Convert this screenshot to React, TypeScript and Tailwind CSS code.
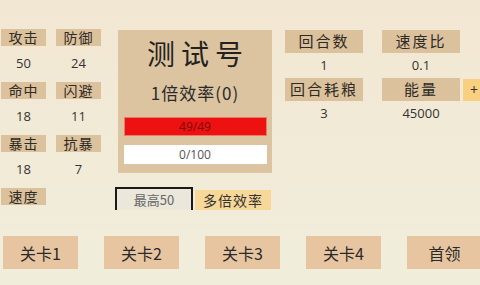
const cjk = "font-['Noto_Sans_CJK_SC','Noto_Sans',sans-serif]"
const num = "font-['Open_Sans','Liberation_Sans',sans-serif]"

const leftStats = [
  [
    { label: '攻击', value: '50' },
    { label: '防御', value: '24' },
  ],
  [
    { label: '命中', value: '18' },
    { label: '闪避', value: '11' },
  ],
  [
    { label: '暴击', value: '18' },
    { label: '抗暴', value: '7' },
  ],
]

const rightStats = [
  [
    { label: '回合数', value: '1' },
    { label: '速度比', value: '0.1' },
  ],
  [
    { label: '回合耗粮', value: '3' },
    { label: '能量', value: '45000' },
  ],
]

const levels = ['关卡1', '关卡2', '关卡3', '关卡4', '首领']

function StatLabel({ text, wide }: { text: string; wide?: boolean }) {
  return (
    <div
      className={`shrink-0 flex items-center justify-center bg-[#dcc19d] text-[#2e2a24] ${cjk} ${
        wide ? 'h-[23px] w-[78px] text-[15px] tracking-[2px]' : 'h-[17px] w-[45px] text-[14px] tracking-[1px]'
      }`}
    >
      {text}
    </div>
  )
}

export default function App() {
  return (
    <div className="w-[480px] h-[285px] overflow-hidden bg-gradient-to-b from-[#f2e7d3] to-[#f0eedb] flex flex-col">
      <div className="flex pt-[29px]">
        {/* 左侧属性 */}
        <div className="w-[118px] shrink-0 pl-[1px] flex flex-col">
          {leftStats.map((row, i) => (
            <div key={i} className="flex flex-col">
              <div className="flex gap-[10px]">
                {row.map((s) => (
                  <StatLabel key={s.label} text={s.label} />
                ))}
              </div>
              <div className="flex gap-[10px] h-[36px]">
                {row.map((s) => (
                  <div
                    key={s.label}
                    className={`w-[45px] flex items-center justify-center text-[13px] text-[#333] ${num}`}
                  >
                    {s.value}
                  </div>
                ))}
              </div>
            </div>
          ))}
          <StatLabel text="速度" />
        </div>

        {/* 中间面板 */}
        <div className="w-[167px] shrink-0 flex flex-col">
          <div className="w-[154px] h-[143px] mt-[1px] bg-[#dcc4a1] flex flex-col items-center px-[5px]">
            <div
              className={`mt-[6px] h-[34px] pl-[6px] flex items-center text-[28px] tracking-[6px] text-[#222] ${cjk}`}
            >
              测试号
            </div>
            <div
              className={`mt-[11px] h-[24px] flex items-center text-[17px] tracking-[1px] text-[#2a2a2a] ${cjk}`}
            >
              1倍效率(0)
            </div>
            <div
              className={`mt-[12px] w-[143px] h-[19px] bg-[#ee1111] border border-[#e87a6a] flex items-center justify-center text-[12px] text-[#7a0808] ${num}`}
            >
              49/49
            </div>
            <div
              className={`mt-[9px] w-[143px] h-[19px] bg-white flex items-center justify-center text-[12px] text-[#555] ${num}`}
            >
              0/100
            </div>
          </div>
          <div className="flex items-end mt-[14px] -ml-[3px] gap-[2px]">
            <div
              className={`w-[78px] h-[23px] border-t-2 border-x-2 border-[#1a1a1a] bg-[#ebe7da] flex items-center justify-center text-[13px] text-[#666] ${cjk}`}
            >
              最高50
            </div>
            <div
              className={`w-[76px] h-[20px] bg-[#f8d899] flex items-center justify-center text-[14px] tracking-[1px] text-[#333] ${cjk}`}
            >
              多倍效率
            </div>
          </div>
        </div>

        {/* 右侧属性 */}
        <div className="shrink-0 flex flex-col pt-[1px]">
          {rightStats.map((row, i) => (
            <div key={i} className="flex flex-col">
              <div className="flex gap-[19px] items-center">
                {row.map((s) => (
                  <StatLabel key={s.label} text={s.label} wide />
                ))}
                {i === 1 && (
                  <div
                    className={`shrink-0 -ml-[16px] w-[22px] h-[22px] bg-[#f8d07f] flex items-center justify-center text-[14px] text-[#333] ${num}`}
                  >
                    +
                  </div>
                )}
              </div>
              <div className="flex gap-[19px] h-[25px]">
                {row.map((s) => (
                  <div
                    key={s.label}
                    className={`w-[78px] shrink-0 flex items-center justify-center text-[13px] text-[#333] ${num}`}
                  >
                    {s.value}
                  </div>
                ))}
              </div>
            </div>
          ))}
        </div>
      </div>

      {/* 关卡按钮 */}
      <div className="mt-auto mb-[16px] flex gap-[26px] pl-[3px]">
        {levels.map((l) => (
          <div
            key={l}
            className={`w-[75px] h-[33px] shrink-0 bg-[#e8c5a1] flex items-center justify-center text-[16px] text-[#2a2a2a] ${cjk}`}
          >
            {l}
          </div>
        ))}
      </div>
    </div>
  )
}
